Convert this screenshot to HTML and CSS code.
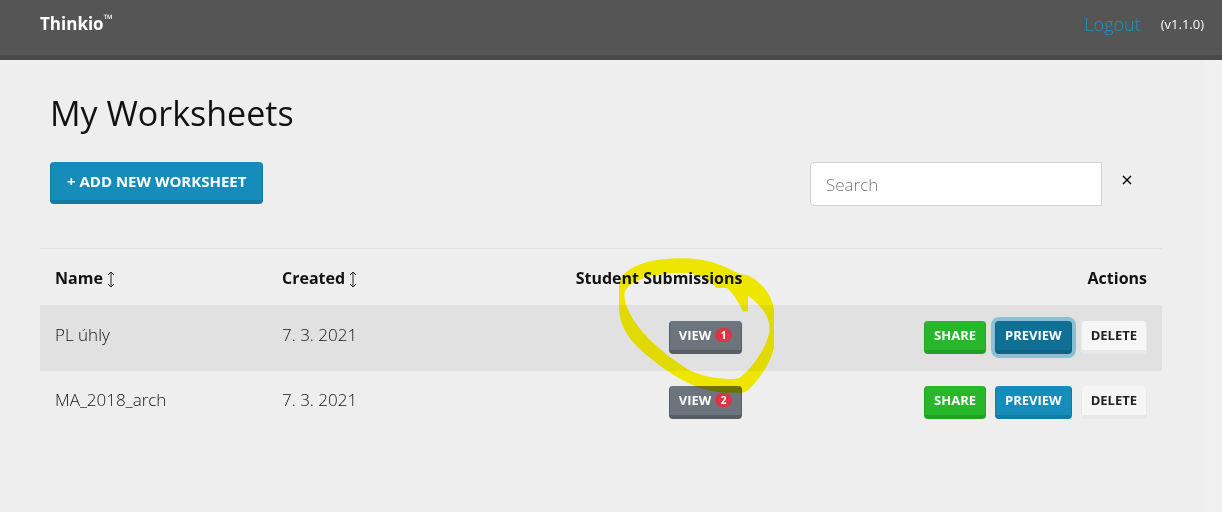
FILE: index.html
```html
<!DOCTYPE html>
<html lang="en">
  <head>
    <meta charset="UTF-8">
    <meta name="viewport" content="width=device-width, initial-scale=1.0">
    <title>Thinkio - My Worksheets</title>
    <link rel="stylesheet" href="styles.css">
  </head>
  <body>
    <header class="navbar">
      <a class="brand" href="#">Thinkio<sup>™</sup></a>
      <nav class="nav-right">
        <a class="logout" href="#">Logout</a>
        <span class="version">(v1.1.0)</span>
      </nav>
    </header>
    <div class="page">
      <main>
        <h1>My Worksheets</h1>
        <div class="toolbar">
          <button class="btn btn-primary btn-add" type="button">+ ADD NEW WORKSHEET</button>
          <form class="search">
            <input type="text" placeholder="Search" aria-label="Search">
            <button class="clear" type="button" aria-label="Clear search">
              <svg width="10" height="10" viewBox="0 0 10 10"><path d="M1 1L9 9M9 1L1 9" stroke="#000" stroke-width="1.4" fill="none"/></svg>
            </button>
          </form>
        </div>
        <table>
          <thead>
            <tr>
              <th class="col-name">Name
                <svg class="sort" width="8" height="17" viewBox="0 0 8 17"><path d="M4 1V16M1 4L4 1L7 4M1 13L4 16L7 13"/></svg>
              </th>
              <th class="col-created">Created
                <svg class="sort" width="8" height="17" viewBox="0 0 8 17"><path d="M4 1V16M1 4L4 1L7 4M1 13L4 16L7 13"/></svg>
              </th>
              <th class="col-submissions">Student Submissions</th>
              <th class="col-actions">Actions</th>
            </tr>
          </thead>
          <tbody>
            <tr class="odd">
              <td>PL úhly</td>
              <td>7. 3. 2021</td>
              <td class="right marked">
                <button class="btn btn-secondary" type="button">VIEW <span class="badge">1</span></button>
                <!-- highlighter circle around the submissions button -->
                <svg class="marker" width="157" height="137" viewBox="180 50 471 411">
                  <path fill-rule="evenodd" d="M183 130C196 80 270 54 370 54C445 54 495 73 545 102L562 103C600 112 648 165 648 215V320C640 365 605 415 575 445Q563 456 550 457H500C440 455 385 430 330 393C250 335 183 285 183 200Z
                  M199 165C200 120 290 98 370 98C420 98 460 118 474 143H507C525 160 540 182 555 213H570V166C605 192 635 225 635 265C633 310 585 384 545 412Q530 417 510 416C455 413 410 402 374 377L328 345L300 320C250 280 202 215 199 165Z"/>
                </svg>
              </td>
              <td class="right">
                <div class="actions">
                  <button class="btn btn-success" type="button">SHARE</button>
                  <button class="btn btn-primary active" type="button">PREVIEW</button>
                  <button class="btn btn-light" type="button">DELETE</button>
                </div>
              </td>
            </tr>
            <tr>
              <td>MA_2018_arch</td>
              <td>7. 3. 2021</td>
              <td class="right">
                <button class="btn btn-secondary" type="button">VIEW <span class="badge">2</span></button>
              </td>
              <td class="right">
                <div class="actions">
                  <button class="btn btn-success" type="button">SHARE</button>
                  <button class="btn btn-primary" type="button">PREVIEW</button>
                  <button class="btn btn-light" type="button">DELETE</button>
                </div>
              </td>
            </tr>
          </tbody>
        </table>
      </main>
    </div>
  </body>
</html>
```
FILE: styles.css
```css
* {
    box-sizing: border-box;
}
body {
    margin: 0;
    min-height: 100vh;
    display: flex;
    flex-direction: column;
    font-family: "Open Sans", "Noto Sans", sans-serif;
    font-size: 17px;
    font-weight: 300;
    line-height: 24px;
    color: #111;
    background-color: #eee;
}
a {
    text-decoration: none;
}
.navbar {
    display: flex;
    justify-content: space-between;
    align-items: flex-start;
    height: 60px;
    padding: 12px 18px 0 40px;
    background-color: #555;
    border-bottom: 5px solid #494949;
}
.brand {
    font-weight: 700;
    color: #fff;
}
.brand sup {
    font-size: 12px;
    font-weight: 400;
    line-height: 0;
}
.nav-right {
    display: flex;
    align-items: center;
    gap: 20px;
}
.logout {
    font-size: 18px;
    color: #1a94c4;
}
.version {
    font-size: 13px;
    font-weight: 400;
    color: #fff;
}
.page {
    flex: 1;
    padding: 32px 60px 32px 40px;
    background: linear-gradient(#f0f0f0, #f0f0f0) right / 18px 100% no-repeat;
}
h1 {
    margin: 0 0 28px 10px;
    font-size: 34px;
    line-height: 42px;
    font-weight: 400;
}
.toolbar {
    display: flex;
    justify-content: space-between;
    align-items: flex-start;
    margin: 0 26px 42px 10px;
}
.btn {
    font-family: inherit;
    font-size: 13px;
    font-weight: 700;
    line-height: 18px;
    height: 33px;
    padding: 5px 9px 6px;
    color: #fff;
    border-style: solid;
    border-width: 0 1px 4px;
    border-radius: 4px;
    white-space: nowrap;
    vertical-align: top;
    cursor: pointer;
}
.btn-add {
    font-size: 15px;
    height: 42px;
    padding: 8px 16px;
    line-height: 22px;
}
.btn-primary {
    background-color: #158cba;
    border-color: #127ba3;
}
.btn-primary.active {
    background-color: #106f94;
    border-color: #0f6384;
    box-shadow: 0 0 0 4px rgba(56, 157, 196, 0.5);
}
.btn-success {
    background-color: #28b62c;
    border-color: #23a127;
}
.btn-secondary {
    background-color: #6c757d;
    border-color: #565e64;
}
.btn-light {
    color: #222;
    background-color: #f6f6f6;
    border-color: #e8e8e8;
}
.search {
    display: flex;
    align-items: flex-start;
    gap: 16px;
}
.search input {
    width: 292px;
    height: 44px;
    padding: 0 15px;
    font: inherit;
    color: #222;
    background-color: #fff;
    border: 1px solid #ced4da;
    border-radius: 4px 0 0 4px;
}
.search input::placeholder {
    color: #777;
    opacity: 1;
}
.clear {
    display: flex;
    align-items: center;
    height: 36px;
    padding: 0 4px;
    background: none;
    border: 0;
}
table {
    width: 100%;
    table-layout: fixed;
    border-collapse: collapse;
}
th {
    height: 56px;
    padding: 2px 15px 0;
    font-size: 16px;
    font-weight: 700;
    text-align: left;
    border-top: 1px solid #dee2e6;
}
td {
    height: 64px;
    padding: 15px 15px 0;
    line-height: 28px;
    vertical-align: top;
}
.odd {
    background-color: #e1e1e1;
}
.odd td {
    height: 66px;
    padding-top: 16px;
}
.col-name {
    width: 227px;
}
.col-created {
    width: 20%;
}
.col-submissions {
    width: 266px;
}
.col-submissions, .col-actions, .right {
    text-align: right;
}
.sort {
    vertical-align: -4px;
    fill: none;
    stroke: #222;
}
.badge {
    display: inline-block;
    padding: 0 6px;
    font-size: 10px;
    line-height: 14px;
    vertical-align: 1px;
    background-color: #dc3545;
    border-radius: 8px;
}
.marked {
    position: relative;
}
.marker {
    position: absolute;
    top: -48px;
    right: -18px;
    fill: #fff700;
    mix-blend-mode: multiply;
    pointer-events: none;
}
.actions {
    display: flex;
    justify-content: flex-end;
    gap: 9px;
}
```
